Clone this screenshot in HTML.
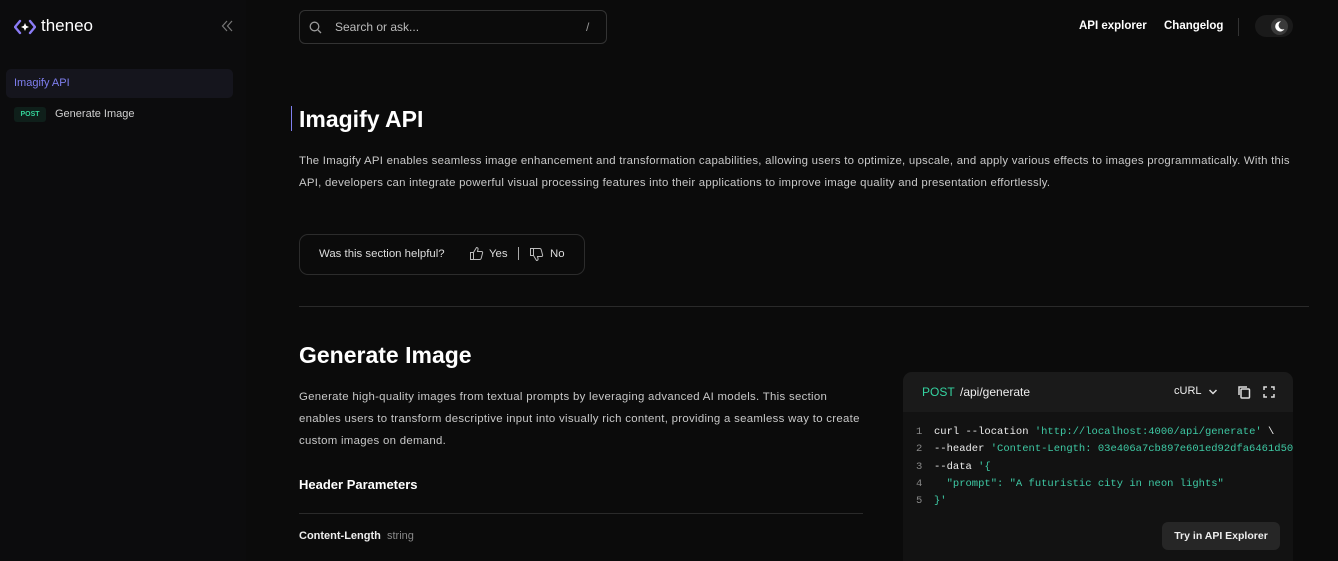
<!DOCTYPE html>
<html><head><meta charset="utf-8"><style>
*{box-sizing:border-box;margin:0;padding:0}
html,body{width:1338px;height:561px;overflow:hidden}
body{background:#0b0b0b;font-family:"Liberation Sans",sans-serif;color:#e5e5e5;position:relative}
.abs{position:absolute}
.mono{font-family:"Liberation Mono",monospace}
.p{white-space:nowrap;font-size:11.4px;line-height:22px;color:#c8c8c8;letter-spacing:0.25px}
</style></head><body>
<div class="abs" style="left:0;top:0;width:246px;height:561px;background:#0c0c0d"></div>
<svg class="abs" style="left:14px;top:19px" width="22" height="16" viewBox="0 0 22 16"><path d="M6 2L1 8l5 6M16 2l5 6-5 6" stroke="#8b7cf6" stroke-width="2.4" fill="none" stroke-linecap="round"/><path d="M11 4l1.2 2.8L15 8l-2.8 1.2L11 12l-1.2-2.8L7 8l2.8-1.2z" fill="#fff"/></svg>
<div class="abs" style="left:41px;top:16px;font-size:17px;color:#fff">theneo</div>
<svg class="abs" style="left:221px;top:20px" width="12" height="12" viewBox="0 0 12 12"><path d="M6 1L1.5 6 6 11M11 1L6.5 6 11 11" stroke="#777" stroke-width="1.2" fill="none"/></svg>
<div class="abs" style="left:6px;top:69px;width:227px;height:29px;background:#15151d;border-radius:5px"></div>
<div class="abs" style="left:14px;top:77px;font-size:11px;color:#7f7ff0">Imagify API</div>
<div class="abs" style="left:14px;top:107px;width:32px;height:15px;background:#0f1f1a;border-radius:3px;font-size:7px;font-weight:bold;color:#34d399;text-align:center;line-height:15px">POST</div>
<div class="abs" style="left:55px;top:108px;font-size:11px;color:#cfcfcf">Generate Image</div>
<div class="abs" style="left:299px;top:10px;width:308px;height:34px;border:1px solid #333;border-radius:6px"></div>
<svg class="abs" style="left:309px;top:21px" width="13" height="13" viewBox="0 0 13 13"><circle cx="5.5" cy="5.5" r="4.3" stroke="#999" stroke-width="1.3" fill="none"/><path d="M9 9l3 3" stroke="#999" stroke-width="1.3"/></svg>
<div class="abs" style="left:335px;top:20px;font-size:12px;color:#bbb">Search or ask...</div>
<div class="abs" style="left:586px;top:20px;font-size:12px;color:#999">/</div>
<div class="abs" style="left:1079px;top:20px;font-size:11.5px;color:#fff;font-weight:bold">API explorer</div>
<div class="abs" style="left:1164px;top:20px;font-size:11.5px;color:#fff;font-weight:bold">Changelog</div>
<div class="abs" style="left:1238px;top:18px;width:1px;height:18px;background:#333"></div>
<div class="abs" style="left:1255px;top:15px;width:38px;height:22px;background:#1a1a1a;border-radius:11px"></div>
<div class="abs" style="left:1271px;top:18px;width:17px;height:17px;border-radius:50%;background:#3a3a3a"></div>
<svg class="abs" style="left:1273px;top:20px" width="13" height="13" viewBox="0 0 13 13"><path d="M8 1.5A5 5 0 1 0 11.5 9 4 4 0 0 1 8 1.5z" fill="#fff"/></svg>
<div class="abs" style="left:291px;top:106px;width:1px;height:25px;background:#7f7ff0"></div>
<div class="abs" style="left:299px;top:106px;font-size:23px;font-weight:bold;color:#fff">Imagify API</div>
<div class="abs p" style="left:299px;top:150px">The Imagify API enables seamless image enhancement and transformation capabilities, allowing users to optimize, upscale, and apply various effects to images programmatically. With this<br>API, developers can integrate powerful visual processing features into their applications to improve image quality and presentation effortlessly.</div>
<div class="abs" style="left:299px;top:234px;width:286px;height:41px;border:1px solid #2c2c2c;border-radius:9px"></div>
<div class="abs" style="left:319px;top:248px;font-size:11.4px;color:#ddd">Was this section helpful?</div>
<svg class="abs" style="left:469px;top:246px" width="15" height="15" viewBox="0 0 15 15"><path d="M1.5 6.5h3v7h-3zM4.5 6.5L7.5 1.5c1.2 0 1.8.8 1.5 2L8.5 5.5h4c.8 0 1.3.7 1.1 1.4l-1.4 5.4c-.2.7-.7 1.2-1.4 1.2H4.5" stroke="#bbb" stroke-width="1" fill="none"/></svg>
<div class="abs" style="left:489px;top:248px;font-size:11.4px;color:#ddd">Yes</div>
<div class="abs" style="left:518px;top:247px;width:1px;height:13px;background:#aaa"></div>
<svg class="abs" style="left:529px;top:247px" width="15" height="15" viewBox="0 0 15 15"><g transform="translate(0,15) scale(1,-1)"><path d="M1.5 6.5h3v7h-3zM4.5 6.5L7.5 1.5c1.2 0 1.8.8 1.5 2L8.5 5.5h4c.8 0 1.3.7 1.1 1.4l-1.4 5.4c-.2.7-.7 1.2-1.4 1.2H4.5" stroke="#bbb" stroke-width="1" fill="none"/></g></svg>
<div class="abs" style="left:550px;top:248px;font-size:11.4px;color:#ddd">No</div>
<div class="abs" style="left:299px;top:306px;width:1010px;height:1px;background:#2a2a2a"></div>
<div class="abs" style="left:299px;top:342px;font-size:23px;font-weight:bold;color:#fff">Generate Image</div>
<div class="abs p" style="left:299px;top:386px;letter-spacing:0.3px">Generate high-quality images from textual prompts by leveraging advanced AI models. This section<br>enables users to transform descriptive input into visually rich content, providing a seamless way to create<br>custom images on demand.</div>
<div class="abs" style="left:299px;top:477px;font-size:13px;font-weight:bold;color:#fff">Header Parameters</div>
<div class="abs" style="left:299px;top:513px;width:564px;height:1px;background:#2a2a2a"></div>
<div class="abs" style="left:299px;top:530px;font-size:11px;font-weight:bold;color:#eee">Content-Length <span style="font-weight:normal;color:#888">&nbsp;string</span></div>
<div class="abs" style="left:903px;top:372px;width:390px;height:200px;background:#121212;border-radius:9px;overflow:hidden">
<div style="height:40px;background:#1a1a1a;position:relative">
<div class="abs" style="left:19px;top:13px;font-size:12px;color:#34d3a0">POST</div>
<div class="abs" style="left:57px;top:13px;font-size:12px;color:#eee">/api/generate</div>
<div class="abs" style="left:271px;top:13px;font-size:11px;color:#eee">cURL</div>
<svg class="abs" style="left:305px;top:16px" width="10" height="8" viewBox="0 0 10 8"><path d="M1.5 2l3.5 3.5L8.5 2" stroke="#ddd" stroke-width="1.5" fill="none"/></svg>
<svg class="abs" style="left:334px;top:13px" width="14" height="14" viewBox="0 0 14 14"><rect x="4" y="4" width="8.5" height="9" rx="1" stroke="#ddd" stroke-width="1.5" fill="none"/><path d="M2 10V2h8" stroke="#ddd" stroke-width="1.5" fill="none"/></svg>
<svg class="abs" style="left:360px;top:14px" width="12" height="12" viewBox="0 0 12 12"><path d="M1 4V1h3M8 1h3v3M11 8v3H8M4 11H1V8" stroke="#ddd" stroke-width="1.5" fill="none"/></svg>
</div>
<div class="mono" style="position:absolute;left:13px;top:52px;font-size:10.5px;line-height:17.3px;color:#888;white-space:pre">1
2
3
4
5</div>
<div class="mono" style="position:absolute;left:31px;top:52px;font-size:10.5px;line-height:17.3px;color:#eee;white-space:pre">curl --location <span style="color:#3ec9a4">'http://localhost:4000/api/generate'</span> \
--header <span style="color:#3ec9a4">'Content-Length: 03e406a7cb897e601ed92dfa6461d50</span>
--data <span style="color:#3ec9a4">'{</span>
<span style="color:#3ec9a4">  "prompt": "A futuristic city in neon lights"</span>
<span style="color:#3ec9a4">}'</span></div>
<div class="abs" style="left:259px;top:150px;width:118px;height:28px;background:#262626;border-radius:6px;font-size:10.5px;font-weight:bold;color:#eee;text-align:center;line-height:28px">Try in API Explorer</div>
</div>
</body></html>
